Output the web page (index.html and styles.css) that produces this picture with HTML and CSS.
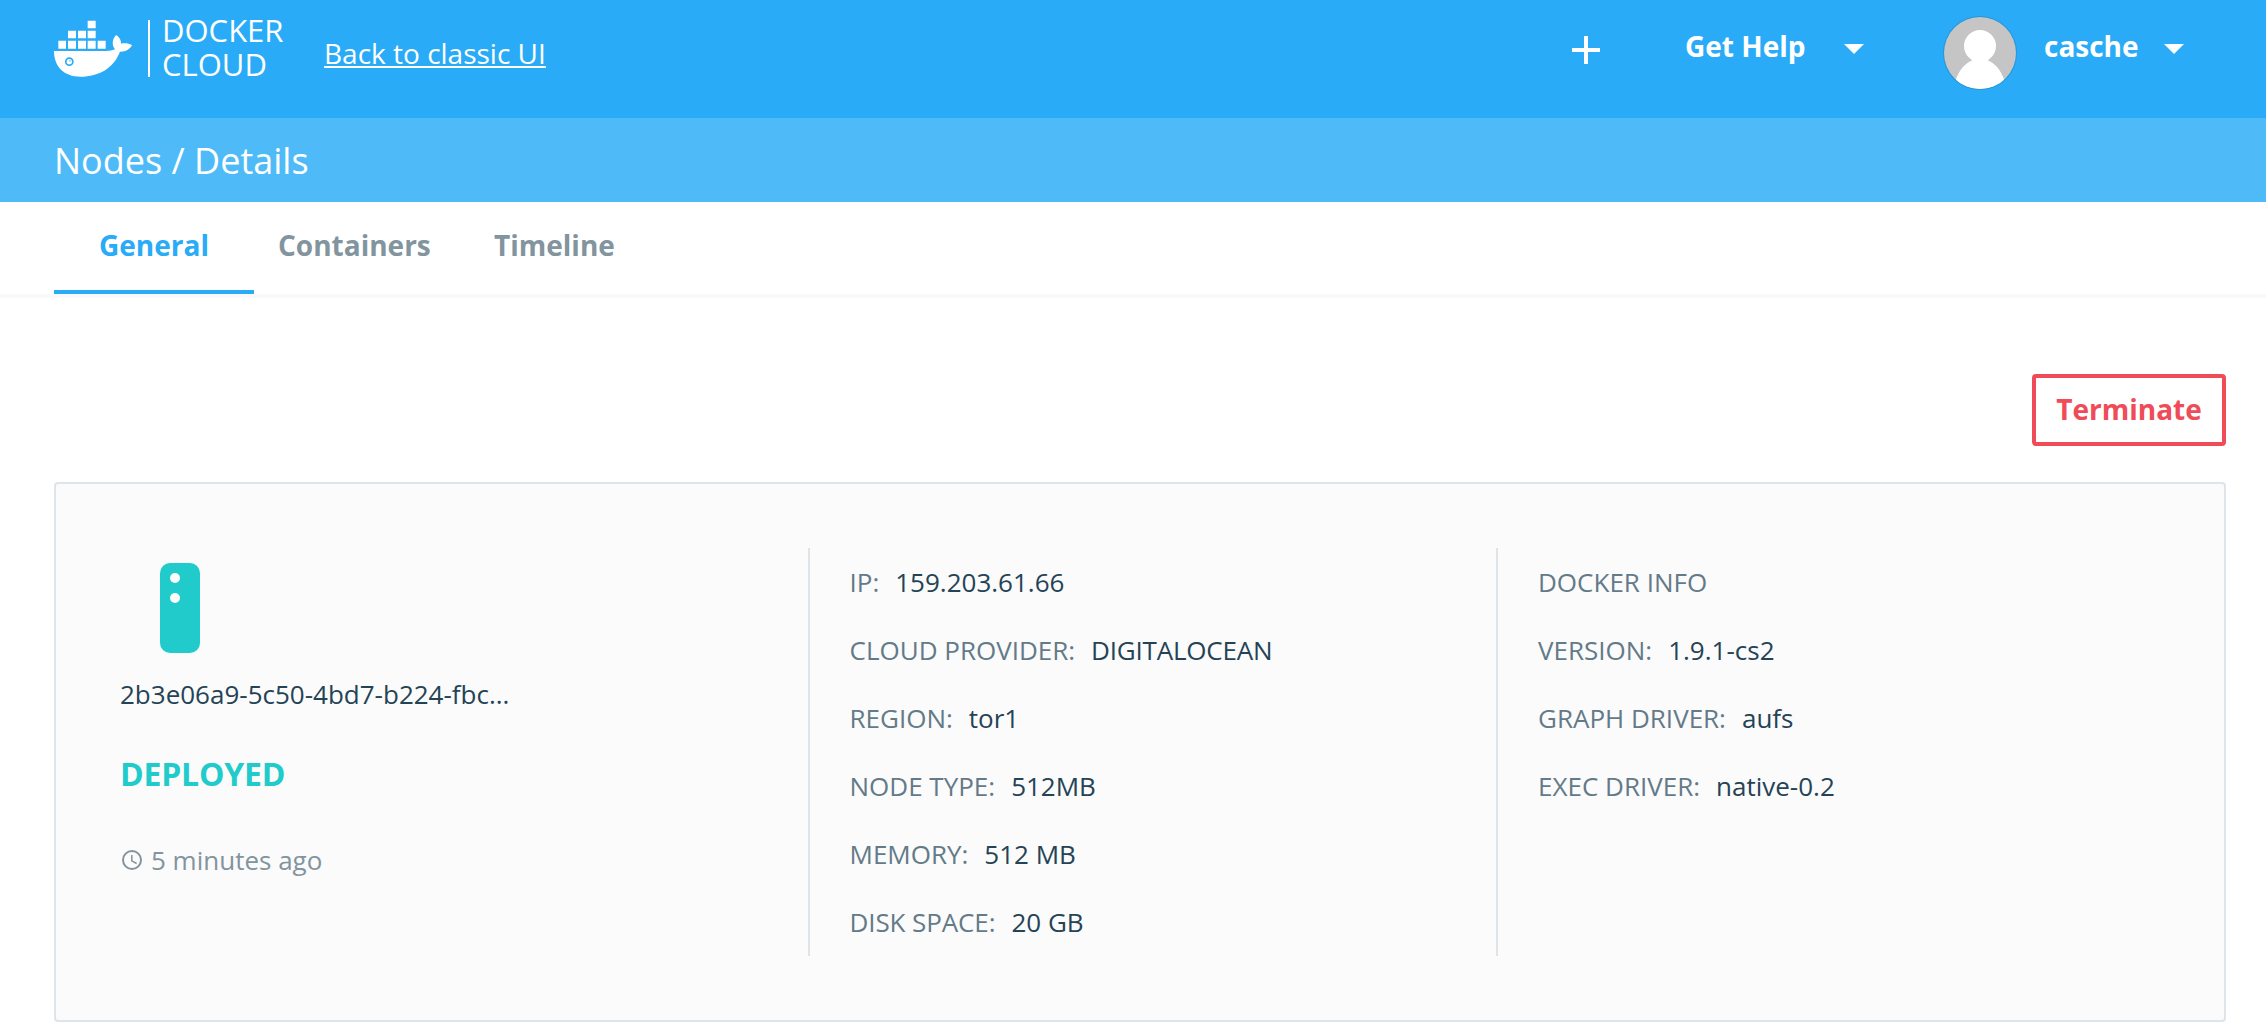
FILE: index.html
```html
<!DOCTYPE html>
<html lang="en">
<head>
<meta charset="utf-8">
<title>Docker Cloud - Node Details</title>
<link rel="stylesheet" href="styles.css">
</head>
<body>
<header class="topbar">
  <a class="brand">
    <svg class="whale" viewBox="42 60 234 171" width="78" height="57" fill="#fff">
      <path d="M143 62h24v23h-24zM84 92h24v23h-24zM114 92h24v23h-24zM143 92h24v23h-24zM55 122h23v24h-23zM84 122h24v24h-24zM114 122h24v24h-24zM143 122h24v24h-24zM173 122h24v24h-24z"/>
      <path fill-rule="evenodd" d="M42 153H198C209 153 217 151 225 148C216 137 215 120 228 105C238 111 244 121 243 131C255 129 267 130 276 136C269 149 255 156 240 155C222 202 179 230 121 230C72 230 42 200 42 153ZM88 172a13 13 0 1 0 0 26a13 13 0 1 0 0-26Z"/>
      <circle cx="88" cy="185" r="8"/>
      <circle cx="90" cy="183" r="2" fill="#29abf7"/>
    </svg>
    <span class="brand-name"><span>DOCKER</span><span>CLOUD</span></span>
  </a>
  <a class="classic">Back to classic UI</a>
  <nav class="actions">
    <svg class="plus" viewBox="0 0 28 28" width="28" height="28"><path d="M14 0v28M0 14h28" stroke="#fff" stroke-width="4"/></svg>
    <span class="help">Get Help</span>
    <i class="caret"></i>
    <svg class="avatar" viewBox="0 0 74 74" width="74" height="74">
      <defs><clipPath id="face"><circle cx="37" cy="37" r="36"/></clipPath></defs>
      <circle cx="37" cy="37" r="37" fill="#2596db"/>
      <g clip-path="url(#face)">
        <path fill="#c5c5c5" d="M0 0h74v74H0z"/>
        <ellipse cx="37" cy="30" rx="16" ry="16"/>
        <path d="M11 74C12 57 22 47 29 44.5C27 41 27 40 29 39H45C47 40 47 41 45 44.5C52 47 62 57 63 74Z"/>
      </g>
    </svg>
    <span class="user">casche</span>
    <i class="caret"></i>
  </nav>
</header>
<div class="crumbs">Nodes / Details</div>
<nav class="tabs">
  <a class="tab active">General</a>
  <a class="tab containers">Containers</a>
  <a class="tab timeline">Timeline</a>
</nav>
<main class="content">
  <div class="toolbar"><button class="terminate">Terminate</button></div>
  <section class="card">
    <div class="summary">
      <svg class="node-icon" viewBox="0 0 40 90" width="40" height="90"><rect width="40" height="90" rx="10" fill="#22cbcb"/><circle cx="15" cy="15" r="5" fill="#fcfcfc"/><circle cx="15" cy="35" r="5" fill="#fcfcfc"/></svg>
      <div class="node-id">2b3e06a9-5c50-4bd7-b224-fbc...</div>
      <div class="status">DEPLOYED</div>
      <div class="time">
        <svg viewBox="0 0 20 20" width="20" height="20" fill="none" stroke="#82949e"><circle cx="10" cy="10" r="9" stroke-width="2"/><path d="M9.8 5v5.8l4.8 2.7" stroke-width="1.5"/></svg>
        <span class="ago">5 minutes ago</span>
      </div>
    </div>
    <dl class="facts host">
      <div><dt>IP:</dt><dd>159.203.61.66</dd></div>
      <div><dt>CLOUD PROVIDER:</dt><dd class="provider">DIGITALOCEAN</dd></div>
      <div><dt>REGION:</dt><dd>tor1</dd></div>
      <div><dt>NODE TYPE:</dt><dd>512MB</dd></div>
      <div><dt>MEMORY:</dt><dd>512 MB</dd></div>
      <div><dt class="disk">DISK SPACE:</dt><dd>20 GB</dd></div>
    </dl>
    <dl class="facts docker">
      <div><dt>DOCKER INFO</dt></div>
      <div><dt>VERSION:</dt><dd>1.9.1-cs2</dd></div>
      <div><dt>GRAPH DRIVER:</dt><dd>aufs</dd></div>
      <div><dt>EXEC DRIVER:</dt><dd>native-0.2</dd></div>
    </dl>
  </section>
</main>
</body>
</html>
```
FILE: styles.css
```css
* { box-sizing: border-box; }
body {
  margin: 0;
  background: #fff;
  color: #254356;
  font-family: "Open Sans", sans-serif;
  font-size: 26px;
  white-space: nowrap;
}
.topbar {
  display: flex;
  align-items: flex-start;
  height: 118px;
  padding: 0 82px 0 54px;
  background: #29abf7;
  color: #fff;
}
.brand { display: flex; width: 270px; }
.whale { margin-top: 20px; }
.brand-name {
  display: flex;
  flex-direction: column;
  margin: 20px 0 0 16px;
  padding-left: 12px;
  height: 57px;
  border-left: 2px solid #fff;
  font-size: 31px;
  line-height: 34px;
}
.brand-name span:first-child { margin-top: -7px; }
.classic {
  margin-top: 33px;
  font-size: 28px;
  line-height: 40px;
  text-decoration: underline;
  text-decoration-thickness: 2px;
  text-underline-offset: 2px;
  text-decoration-skip-ink: none;
}
.actions {
  display: flex;
  align-items: flex-start;
  margin-left: auto;
  font-size: 28px;
  font-weight: 700;
  line-height: 40px;
}
.plus { margin: 36px 85px 0 0; }
.help { width: 159px; margin-top: 26px; }
.caret {
  margin-top: 44px;
  border: 10px solid transparent;
  border-top-color: #fff;
  border-bottom: 0;
}
.avatar { margin: 16px 27px 0 79px; fill: #fff; }
.user { width: 120px; margin-top: 26px; }
.crumbs {
  height: 84px;
  padding: 1px 0 0 54px;
  background: #4ebbf8;
  color: #fff;
  font-size: 36px;
  line-height: 84px;
}
.tabs {
  display: flex;
  height: 96px;
  padding-left: 54px;
  border-bottom: 4px solid #f7f9fb;
  color: #82949e;
  font-size: 28px;
  font-weight: 700;
  line-height: 86px;
}
.tab { height: 92px; }
.active {
  width: 200px;
  margin-right: 24px;
  border-bottom: 4px solid #29abf7;
  color: #29abf7;
  text-align: center;
}
.containers { width: 216px; }
.content { padding: 76px 40px 0 54px; }
.toolbar { display: flex; justify-content: flex-end; }
.terminate {
  width: 194px;
  height: 72px;
  padding: 0 0 2px;
  border: 4px solid #ef4c57;
  border-radius: 4px;
  background: #fff;
  color: #ef4c57;
  font: 700 28px/60px "Open Sans", sans-serif;
}
.card {
  display: flex;
  height: 540px;
  margin-top: 36px;
  padding: 64px;
  border: 2px solid #dfe4e8;
  border-radius: 4px;
  background: #fbfbfb;
}
.summary { width: 688px; }
.node-icon { display: block; margin: 15px 0 0 40px; }
.node-id { margin-top: 21px; line-height: 40px; }
.status {
  margin-top: 40px;
  color: #22cbcb;
  font-size: 32px;
  font-weight: 700;
  letter-spacing: -0.2px;
  line-height: 40px;
}
.time {
  display: flex;
  align-items: center;
  gap: 9px;
  margin: 46px 0 0 2px;
  color: #82949e;
  line-height: 40px;
}
.facts {
  width: 688px;
  margin: 0;
  padding-left: 40px;
  border-left: 2px solid #dfe4e8;
}
.host { padding-left: 39.5px; }
.facts div { display: flex; gap: 16px; line-height: 68px; }
.docker { width: 620px; }
dt { color: #637a88; }
dd { margin: 0; }
.provider { letter-spacing: -0.2px; }
.disk { letter-spacing: -0.1px; }
```
